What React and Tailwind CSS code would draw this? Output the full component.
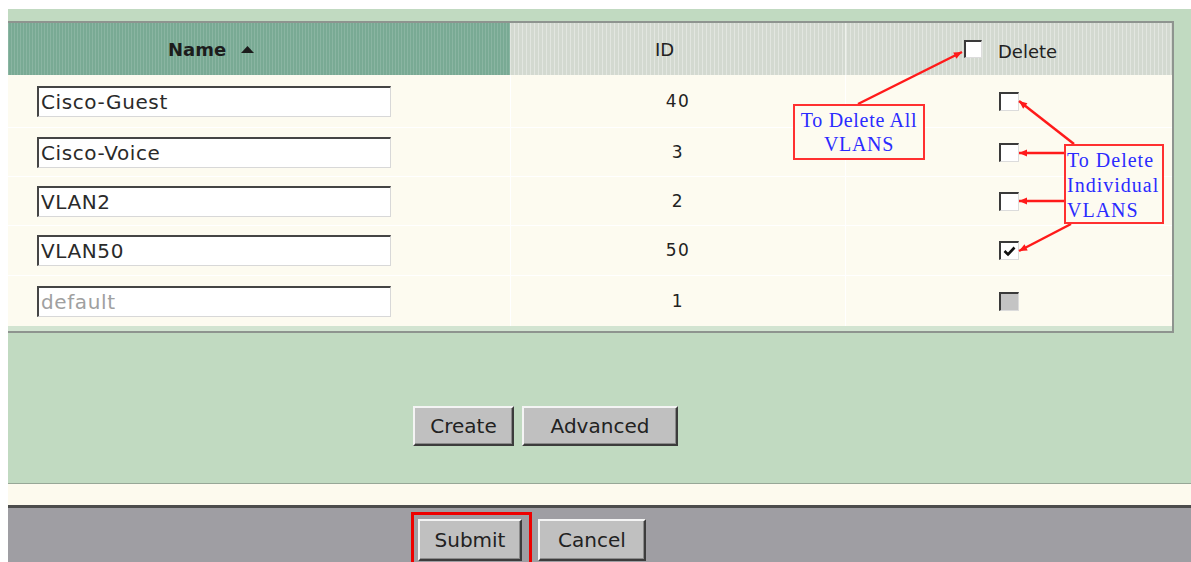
import React from 'react';

const ROWS = [
  { name: 'Cisco-Guest', id: 40, h: 'h-[53px]', state: 'off' },
  { name: 'Cisco-Voice', id: 3, h: 'h-[49px]', state: 'off' },
  { name: 'VLAN2', id: 2, h: 'h-[49px]', state: 'off' },
  { name: 'VLAN50', id: 50, h: 'h-[50px]', state: 'on' },
  { name: 'default', id: 1, h: 'h-[50px]', state: 'disabled' },
];

// red callout arrows: [x1, y1, x2, y2], head drawn at the second point
const ARROWS = [
  [858, 104, 962, 52],
  [1074, 144, 1019, 101],
  [1064, 153, 1019, 153],
  [1064, 201, 1019, 201],
  [1071, 224, 1019, 251],
];

function head([x1, y1, x2, y2]) {
  const dx = x2 - x1;
  const dy = y2 - y1;
  const len = Math.hypot(dx, dy);
  const ux = dx / len;
  const uy = dy / len;
  const bx = x2 - ux * 8;
  const by = y2 - uy * 8;
  const px = -uy * 3.5;
  const py = ux * 3.5;
  return `${x2},${y2} ${bx + px},${by + py} ${bx - px},${by - py}`;
}

function Checkbox({ state = 'off', small }) {
  const size = small ? 'w-[18px] h-[18px]' : 'w-[20px] h-[19px]';
  const fill = state === 'disabled' ? 'bg-[#c4c4c4]' : 'bg-white';
  return (
    <span
      className={`inline-flex items-center justify-center align-middle ${size} ${fill} border-t-2 border-l-2 border-b border-r border-t-[#3a3a3a] border-l-[#3a3a3a] border-b-[#dcdcdc] border-r-[#dcdcdc]`}
    >
      {state === 'on' && (
        <svg width="13" height="11" viewBox="0 0 13 11">
          <polyline points="1.5,5 5,8.5 11.5,1.5" fill="none" stroke="#111" strokeWidth="2.6" />
        </svg>
      )}
    </span>
  );
}

function Btn({ children, w }) {
  return (
    <button
      className={`${w} bg-[#c0c0c0] border-2 border-t-[#f4f4f4] border-l-[#f4f4f4] border-b-[#3c3c3c] border-r-[#3c3c3c] shadow-[inset_-1px_-1px_0_#8a8a8a] text-[20px] text-[#222] font-['DejaVu_Sans',sans-serif] flex items-center justify-center`}
    >
      {children}
    </button>
  );
}

export default function App() {
  return (
    <div className="relative w-[1191px] h-[562px] overflow-hidden bg-white pl-[8px] pt-[9px] flex flex-col font-['DejaVu_Sans',sans-serif]">
      {/* green page body */}
      <div className="shrink-0 h-[475px] bg-[#c1dac1] border-b border-[#97a797] pt-[12px] flex flex-col">
        <div className="mr-[17px] border-t-2 border-r-2 border-b-2 border-[#8e948f] bg-[#d2e4d1] pb-[5px]">
          {/* header */}
          <div className="grid grid-cols-[502px_335px_1fr] h-[52px] text-[18px] text-[#222]">
            <div className="flex items-center pl-[160px] bg-[#79aa94] bg-[repeating-linear-gradient(90deg,rgba(255,255,255,0.13)_0_1px,transparent_1px_3px)]">
              <span className="font-bold text-[#1c1c1c]">Name</span>
              <svg className="ml-[15px]" width="13" height="7" viewBox="0 0 13 7">
                <polygon points="6.5,0 13,7 0,7" fill="#1c1c1c" />
              </svg>
            </div>
            <div className="flex items-center pl-[145px] bg-[#d3d9d0] bg-[repeating-linear-gradient(90deg,rgba(255,255,255,0.35)_0_1px,transparent_1px_4px)]">
              ID
            </div>
            <div className="flex items-center pl-[118px] border-l border-[#eef1ec] bg-[#d3d9d0] bg-[repeating-linear-gradient(90deg,rgba(255,255,255,0.35)_0_1px,transparent_1px_4px)]">
              <Checkbox small />
              <span className="ml-[16px] mt-[4px]">Delete</span>
            </div>
          </div>

          {/* rows */}
          <div className="bg-[#fdfbf0]">
            {ROWS.map((r, i) => (
              <div
                key={r.name}
                className={`grid grid-cols-[502px_335px_1fr] ${r.h} ${i < ROWS.length - 1 ? 'border-b border-white' : ''}`}
              >
                <div className="flex items-center pl-[29px]">
                  <div
                    className={`w-[354px] h-[31px] bg-white border-t-2 border-l-2 border-b border-r border-t-[#454545] border-l-[#454545] border-b-[#d8d8d8] border-r-[#d8d8d8] pl-[2px] flex items-center text-[20px] tracking-[0.6px] ${r.state === 'disabled' ? 'text-[#a0a0a0]' : 'text-[#2a2a2a]'}`}
                  >
                    {r.name}
                  </div>
                </div>
                <div className="flex items-center justify-center border-l border-white text-[17px] tracking-[1.5px] text-[#222] pt-[1px]">
                  {r.id}
                </div>
                <div className="flex items-center justify-center border-l border-white">
                  <Checkbox state={r.state} />
                </div>
              </div>
            ))}
          </div>
        </div>

        <div className="pl-[405px] pt-[73px] flex gap-[8px]">
          <Btn w="w-[101px] h-[40px]">Create</Btn>
          <Btn w="w-[156px] h-[40px]">Advanced</Btn>
        </div>
      </div>

      {/* cream strip */}
      <div className="shrink-0 h-[24px] bg-[#fdfaee] border-b-[3px] border-[#4c4c4c]" />

      {/* action bar */}
      <div className="flex-1 min-h-0 overflow-hidden bg-[#9f9ea3] pl-[403px] pt-[4px] flex items-start gap-[6px]">
        <div className="shrink-0 border-[3px] border-[#ee0000] pl-[4px] pr-[7px] pt-[4px] pb-[10px]">
          <Btn w="w-[104px] h-[42px]">Submit</Btn>
        </div>
        <div className="shrink-0 pt-[7px]">
          <Btn w="w-[108px] h-[42px]">Cancel</Btn>
        </div>
      </div>

      {/* callouts */}
      <svg className="absolute inset-0 pointer-events-none" width="1191" height="562">
        {ARROWS.map((a, i) => (
          <g key={i}>
            <line x1={a[0]} y1={a[1]} x2={a[2]} y2={a[3]} stroke="#ff1a1a" strokeWidth="2.5" />
            <polygon points={head(a)} fill="#ff1a1a" />
          </g>
        ))}
      </svg>
      <div className="absolute left-[793px] top-[104px] w-[132px] h-[56px] border-2 border-[#ff3030] bg-[#fdfbf0] flex flex-col items-center justify-center text-[20px] leading-[24px] tracking-[0.7px] text-[#2b2bff] font-['Liberation_Serif',serif]">
        <span>To Delete All</span>
        <span>VLANS</span>
      </div>
      <div className="absolute left-[1064px] top-[144px] w-[100px] h-[80px] border-2 border-[#ff3030] bg-[#fdfbf0] pl-[1px] pt-[2px] flex flex-col text-[20px] leading-[25px] tracking-[1px] text-[#2b2bff] font-['Liberation_Serif',serif]">
        <span>To Delete</span>
        <span>Individual</span>
        <span>VLANS</span>
      </div>
    </div>
  );
}
